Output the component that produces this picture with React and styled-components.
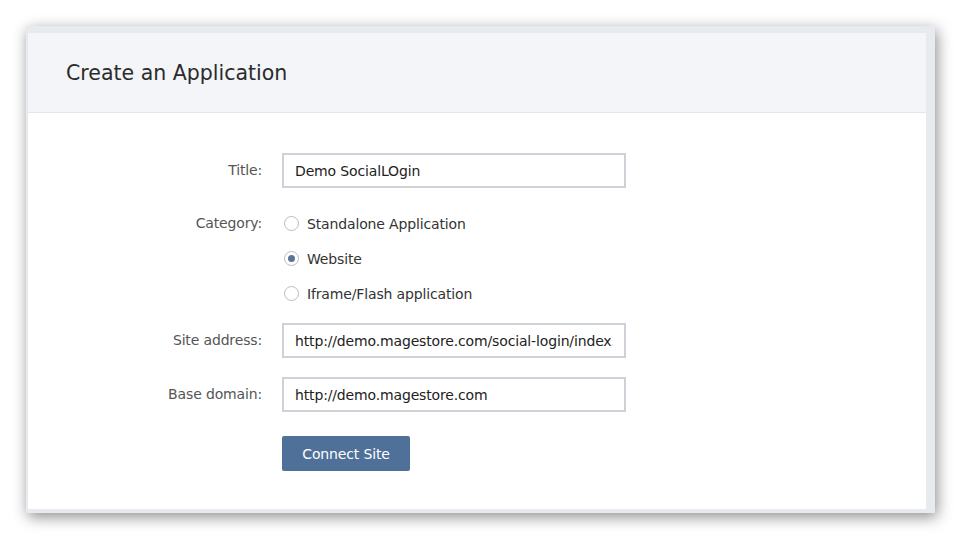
import * as React from "react";
import styled, { createGlobalStyle } from "styled-components";

const GlobalStyle = createGlobalStyle`
  html, body {
    margin: 0;
    padding: 0;
    background: #ffffff;
  }
  body {
    font-family: "DejaVu Sans", "Liberation Sans", sans-serif;
    color: #333;
  }
`;

const Page = styled.div`
  width: 961px;
  height: 539px;
  padding: 26px 0 0 26px;
  box-sizing: border-box;
`;

const Frame = styled.div`
  width: 909px;
  height: 487px;
  box-sizing: border-box;
  border-style: solid;
  border-color: #e7eaee;
  border-width: 7px 9px 4px 2px;
  background: #fff;
  box-shadow: 2px 4px 14px rgba(0, 0, 0, 0.45);
  display: flex;
  flex-direction: column;
`;

const Header = styled.div`
  height: 80px;
  box-sizing: border-box;
  background: #f3f5f8;
  border-bottom: 1px solid #e3e6eb;
  display: flex;
  align-items: center;
  padding: 0 0 0 38px;
`;

const Heading = styled.h1`
  margin: 0;
  font-size: 20.5px;
  font-weight: 400;
  color: #2b2b2b;
`;

const Body = styled.div`
  padding-top: 40px;
  display: flex;
  flex-direction: column;
`;

const Row = styled.div`
  display: flex;
  align-items: ${(p) => (p.$top ? "flex-start" : "center")};
  gap: 20px;
  margin-bottom: ${(p) => p.$mb || 0}px;
`;

const Label = styled.label`
  width: 234px;
  text-align: right;
  font-size: 14px;
  letter-spacing: -0.15px;
  color: #555;
  line-height: 35px;
`;

const Input = styled.input`
  width: 344px;
  height: 35px;
  box-sizing: border-box;
  border: 2px solid #cdd1d8;
  padding: 0 11px;
  font-family: inherit;
  font-size: 14px;
  letter-spacing: -0.15px;
  color: #222;
  outline: none;
`;

const Options = styled.div`
  display: flex;
  flex-direction: column;
`;

const Option = styled.label`
  height: 35px;
  display: flex;
  align-items: center;
  gap: 8px;
  padding-left: 2px;
  font-size: 14px;
  letter-spacing: -0.15px;
  color: #333;
`;

const Radio = styled.span`
  width: 15px;
  height: 15px;
  box-sizing: border-box;
  border-radius: 50%;
  border: 1px solid #b8bcc3;
  background: #fff;
  display: flex;
  align-items: center;
  justify-content: center;
  &::after {
    content: "";
    width: 7px;
    height: 7px;
    border-radius: 50%;
    background: ${(p) => (p.$checked ? "#5a7498" : "transparent")};
  }
`;

const Spacer = styled.div`
  width: 234px;
`;

const Button = styled.button`
  width: 128px;
  height: 35px;
  border: none;
  border-radius: 2px;
  background: #4f7199;
  color: #fff;
  font-family: inherit;
  font-size: 14px;
  letter-spacing: -0.15px;
  cursor: pointer;
`;

const categories = [
  { text: "Standalone Application", checked: false },
  { text: "Website", checked: true },
  { text: "Iframe/Flash application", checked: false },
];

export default function App() {
  return (
    <>
      <GlobalStyle />
      <Page>
        <Frame>
          <Header>
            <Heading>Create an Application</Heading>
          </Header>
          <Body>
            <Row $mb={18}>
              <Label>Title:</Label>
              <Input defaultValue="Demo SocialLOgin" />
            </Row>
            <Row $top $mb={12}>
              <Label>Category:</Label>
              <Options>
                {categories.map((c) => (
                  <Option key={c.text}>
                    <Radio $checked={c.checked} />
                    {c.text}
                  </Option>
                ))}
              </Options>
            </Row>
            <Row $mb={19}>
              <Label>Site address:</Label>
              <Input defaultValue="http://demo.magestore.com/social-login/index.php" />
            </Row>
            <Row $mb={24}>
              <Label>Base domain:</Label>
              <Input defaultValue="http://demo.magestore.com" />
            </Row>
            <Row>
              <Spacer />
              <Button>Connect Site</Button>
            </Row>
          </Body>
        </Frame>
      </Page>
    </>
  );
}
